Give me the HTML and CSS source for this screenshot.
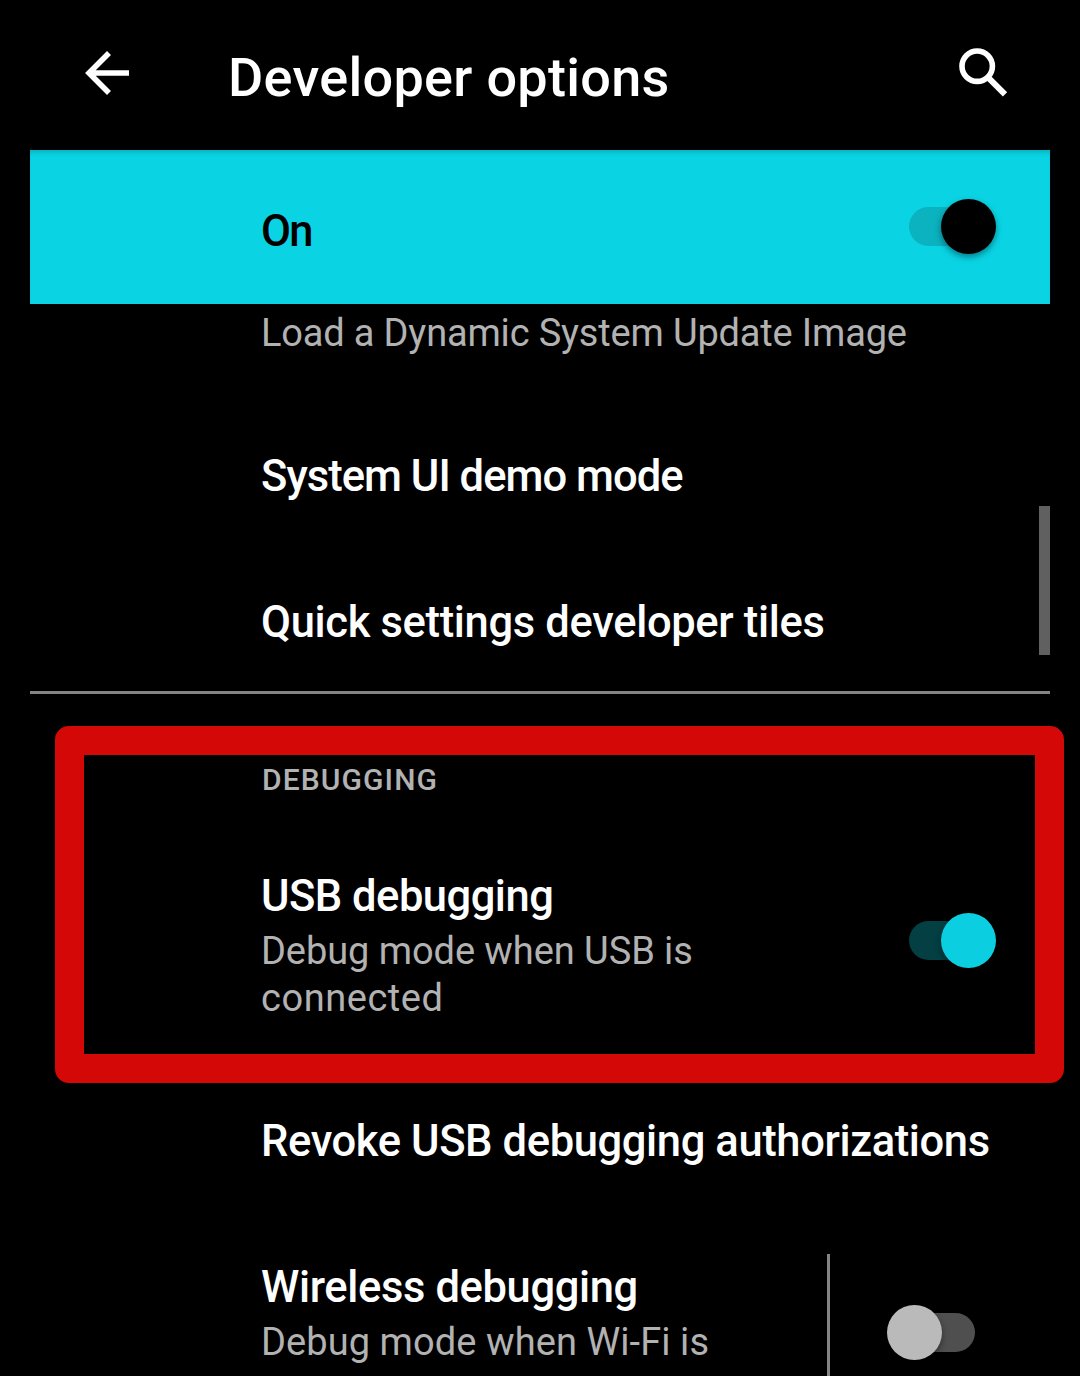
FILE: index.html
```html
<!DOCTYPE html>
<html lang="en">
<head>
<meta charset="utf-8">
<title>Developer options</title>
<link rel="stylesheet" href="styles.css">
</head>
<body>
<div class="screen">
  <header class="toolbar">
    <svg class="back" width="44" height="44" viewBox="0 0 44 44"><path d="M44 22H4M24 2L4 22L24 42" fill="none" stroke="#fff" stroke-width="5.6"/></svg>
    <h1 class="title">Developer options</h1>
    <svg class="search" width="50" height="50" viewBox="0 0 50 50"><circle cx="19.2" cy="19.2" r="15.2" fill="none" stroke="#fff" stroke-width="5.6"/><path d="M29.5 29.8L47 47.3" stroke="#fff" stroke-width="6"/></svg>
  </header>
  <main class="content">
    <div class="master">
      <span class="name on">On</span>
      <span class="switch dark"><span class="thumb"></span></span>
    </div>
    <div class="row dsu"><span class="summary load">Load a Dynamic System Update Image</span></div>
    <div class="row"><span class="name system">System UI demo mode</span></div>
    <div class="row tiles"><span class="name quick">Quick settings developer tiles</span></div>
    <hr class="divider">
    <h2 class="category">DEBUGGING</h2>
    <div class="row usb">
      <div class="texts">
        <div class="name usb-name">USB debugging</div>
        <div class="summary"><span class="usb-sum">Debug mode when USB is</span><br><span class="conn">connected</span></div>
      </div>
      <span class="switch cyan"><span class="thumb"></span></span>
    </div>
    <div class="row"><span class="name revoke">Revoke USB debugging authorizations</span></div>
    <div class="row wireless">
      <div class="texts">
        <div class="name wifi-name">Wireless debugging</div>
        <div class="summary wifi-sum">Debug mode when Wi-Fi is</div>
      </div>
      <div class="side"><span class="switch off"><span class="thumb"></span></span></div>
    </div>
  </main>
  <div class="scrollbar"></div>
  <div class="highlight"></div>
</div>
</body>
</html>
```
FILE: styles.css
```css
* { box-sizing: border-box; }
body { margin: 0; background: #000; }
.screen {
  position: relative;
  width: 1080px;
  height: 1376px;
  overflow: hidden;
  background: #000;
  color: #fff;
  font-family: Roboto, "Liberation Sans", sans-serif;
  white-space: nowrap;
}
.toolbar { display: flex; height: 150px; padding: 0 72px 0 85px; }
.back { margin-top: 51px; }
.search { margin: 47px 0 0 auto; }
.title { margin: 48px 0 0 99px; font-size: 54px; line-height: 60px; font-weight: 500; letter-spacing: .3px; }
.content { margin: 0 30px; }
.master {
  display: flex;
  justify-content: space-between;
  align-items: center;
  height: 154px;
  padding: 0 53px 0 231px;
  background: #0ad4e4;
  box-shadow: inset 0 5px 5px -3px rgba(0, 50, 55, .25);
}
.name { font-size: 43.5px; line-height: 57px; font-weight: 500; }
.summary { font-size: 38px; line-height: 47px; color: #b2b2b2; }
.on { color: #000; padding-top: 8px; letter-spacing: -1.8px; }
.load { letter-spacing: -.17px; }
.system { letter-spacing: -.95px; }
.quick { letter-spacing: -.33px; }
.usb-name { letter-spacing: -.5px; }
.usb-sum { letter-spacing: -.07px; }
.conn { letter-spacing: .55px; }
.revoke { letter-spacing: -.38px; }
.wifi-name { letter-spacing: -.36px; }
.wifi-sum { letter-spacing: .08px; }
.row { display: flex; align-items: center; height: 146px; padding-left: 231px; }
.dsu { height: 99px; align-items: flex-start; padding-top: 6px; }
.tiles { height: 142px; padding-top: 4px; }
.divider { height: 3px; margin: 0; border: 0; background: #848484; }
.category {
  margin: 66px 0 0;
  padding-left: 232px;
  font-size: 30px;
  line-height: 40px;
  font-weight: 500;
  letter-spacing: 1.1px;
  color: #b2b2b2;
}
.usb { height: 268px; align-items: flex-start; justify-content: space-between; padding-top: 68px; padding-right: 53px; }
.texts .summary { margin-top: 3px; }
.usb .switch { margin-top: 45px; }
.switch { display: flex; align-items: center; width: 88px; height: 56px; }
.switch::before { content: ""; width: 66px; height: 39px; margin-bottom: 1px; border-radius: 20px; flex: none; }
.thumb { flex: none; width: 55px; height: 55px; border-radius: 50%; margin: 0 0 1px -34px; z-index: 1; }
.dark::before { background: #0bb2bf; }
.dark .thumb { background: #000; box-shadow: 0 3px 6px rgba(0, 40, 45, .5); }
.cyan::before { background: #043f43; }
.cyan .thumb { background: #0bcfe0; box-shadow: 0 3px 6px rgba(0, 0, 0, .4); }
.off { flex-direction: row-reverse; }
.off::before { background: #4f4f4f; }
.off .thumb { background: #bababa; margin: 0 -33px 1px 0; box-shadow: 0 3px 6px rgba(0, 0, 0, .4); }
.wireless { align-items: flex-start; justify-content: space-between; height: 162px; padding-top: 40px; padding-right: 75px; }
.wireless .texts { padding-top: 5px; }
.side { height: 122px; width: 148px; padding: 51px 0 0 57px; border-left: 3px solid #848484; }
.scrollbar { position: absolute; left: 1039px; top: 506px; width: 11px; height: 149px; background: #606060; }
.highlight { position: absolute; left: 55px; top: 726px; width: 1009px; height: 357px; border: 29px solid #d40806; border-radius: 14px; }
```
